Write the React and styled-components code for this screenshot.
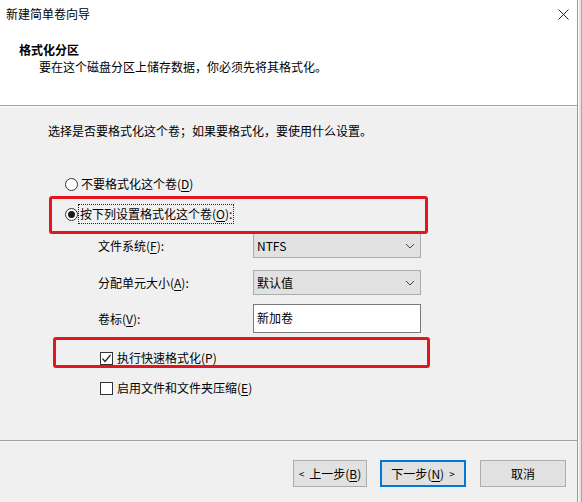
import React from "react";
import styled, { createGlobalStyle } from "styled-components";

const GlobalStyle = createGlobalStyle`
  html, body { margin: 0; padding: 0; background: #f0f0f0; }
  body {
    font-family: "Noto Sans CJK SC", "Noto Sans", "Liberation Sans", sans-serif;
    font-size: 12px;
    color: #000;
  }
  u { text-decoration: underline; text-underline-offset: 2px; }
`;

const Frame = styled.div`
  width: 582px;
  height: 502px;
  display: flex;
  overflow: hidden;
  background: #f0f0f0;
`;

const Window = styled.div`
  width: 578px;
  height: 502px;
  box-sizing: border-box;
  border-right: 1px solid #9a9a9a;
  display: flex;
  flex-direction: column;
  background: #f0f0f0;
`;

const Edge = styled.div`
  flex: 1;
  background: #e4e4e4;
  border-left: 1px solid #fafafa;
  box-shadow: inset -1px 0 0 #a8a8a8;
`;

const Header = styled.div`
  height: 106px;
  box-sizing: border-box;
  background: #fff;
  border-bottom: 1px solid #a0a0a0;
  box-shadow: 0 1px 0 #fff;
  display: flex;
  flex-direction: column;
`;

const TitleBar = styled.div`
  height: 28px;
  display: flex;
  align-items: center;
  justify-content: space-between;
  padding-left: 6px;
`;

const Title = styled.span`
  line-height: 16px;
`;

const CloseButton = styled.div`
  width: 28px;
  height: 28px;
  display: flex;
  align-items: center;
  justify-content: center;
`;

const HeadingBlock = styled.div`
  padding-left: 19px;
  margin-top: 14px;
`;

const Heading = styled.div`
  font-weight: bold;
  line-height: 16px;
`;

const SubHeading = styled.div`
  padding-left: 20px;
  margin-top: 1px;
  line-height: 16px;
`;

const Body = styled.div`
  flex: 1;
  position: relative;
  display: flex;
  flex-direction: column;
`;

const Intro = styled.div`
  padding: 17px 0 0 48px;
  line-height: 16px;
`;

const OptionRow = styled.div`
  height: 30px;
  display: flex;
  align-items: center;
  padding-left: ${(p) => p.$indent}px;
  margin-top: ${(p) => p.$top || 0}px;
  gap: ${(p) => p.$gap || 3}px;
`;

const RadioCircle = styled.span`
  width: 13px;
  height: 13px;
  box-sizing: border-box;
  border-radius: 50%;
  border: 1px solid #333;
  background: #fff;
  display: flex;
  align-items: center;
  justify-content: center;
  &::after {
    content: "";
    width: 7px;
    height: 7px;
    border-radius: 50%;
    background: ${(p) => (p.$checked ? "#1a1a1a" : "transparent")};
  }
`;

const CheckBox = styled.span`
  width: 13px;
  height: 13px;
  box-sizing: border-box;
  border: 1px solid #333;
  background: #fff;
  display: flex;
  align-items: center;
  justify-content: center;
`;

const OptionText = styled.span`
  line-height: 16px;
  padding: 1px 1px;
  outline: ${(p) => (p.$focused ? "1px dotted #222" : "none")};
`;

const FieldRow = styled.div`
  display: flex;
  align-items: center;
  height: ${(p) => p.$height}px;
  margin-top: ${(p) => p.$top}px;
  padding-left: 98px;
`;

const FieldLabel = styled.span`
  width: 155px;
  line-height: 16px;
`;

const Select = styled.div`
  width: 168px;
  height: 25px;
  box-sizing: border-box;
  background: #e1e1e1;
  border: 1px solid #adadad;
  display: flex;
  align-items: center;
  justify-content: space-between;
  padding: 0 5px 0 3px;
`;

const TextInput = styled.div`
  width: 168px;
  height: 29px;
  box-sizing: border-box;
  background: #fff;
  border: 1px solid #7a7a7a;
  display: flex;
  align-items: center;
  padding-left: 3px;
  padding-bottom: 2px;
`;

const Highlight = styled.div`
  position: absolute;
  left: ${(p) => p.$left}px;
  top: ${(p) => p.$top}px;
  width: ${(p) => p.$width}px;
  height: ${(p) => p.$height}px;
  box-sizing: border-box;
  border: 3px solid #e3161e;
  border-radius: 3px;
  pointer-events: none;
`;

const Footer = styled.div`
  height: 62px;
  box-sizing: border-box;
  border-top: 1px solid #a0a0a0;
  box-shadow: inset 0 1px 0 #f8f8f8;
  display: flex;
  justify-content: flex-end;
  align-items: flex-start;
  padding: 19px 11px 0 0;
`;

const Button = styled.div`
  width: ${(p) => p.$width}px;
  height: 27px;
  box-sizing: border-box;
  background: #e1e1e1;
  border: ${(p) => (p.$focused ? "2px solid #0078d7" : "1px solid #adadad")};
  display: flex;
  align-items: center;
  justify-content: center;
  margin-left: ${(p) => p.$gap || 0}px;
  line-height: 16px;
  gap: 5px;
`;

const Arrow = styled.span`
  font-size: 10px;
`;

const Chevron = () => (
  <svg width="10" height="6" viewBox="0 0 10 6">
    <polyline points="1,1 5,5 9,1" fill="none" stroke="#444" strokeWidth="1" />
  </svg>
);

export default function App() {
  return (
    <>
      <GlobalStyle />
      <Frame>
        <Window>
          <Header>
            <TitleBar>
              <Title>新建简单卷向导</Title>
              <CloseButton>
                <svg width="11" height="11" viewBox="0 0 11 11">
                  <path d="M0.5 0.5 L10.5 10.5 M10.5 0.5 L0.5 10.5" stroke="#222" strokeWidth="1" />
                </svg>
              </CloseButton>
            </TitleBar>
            <HeadingBlock>
              <Heading>格式化分区</Heading>
              <SubHeading>要在这个磁盘分区上储存数据，你必须先将其格式化。</SubHeading>
            </HeadingBlock>
          </Header>
          <Body>
            <Intro>选择是否要格式化这个卷；如果要格式化，要使用什么设置。</Intro>
            <OptionRow $indent={65} $top={30} $gap={2}>
              <RadioCircle />
              <OptionText>
                不要格式化这个卷(<u>D</u>)
              </OptionText>
            </OptionRow>
            <OptionRow $indent={65} $gap={1}>
              <RadioCircle $checked />
              <OptionText $focused>
                按下列设置格式化这个卷(<u>O</u>):
              </OptionText>
            </OptionRow>
            <FieldRow $height={25} $top={4}>
              <FieldLabel>
                文件系统(<u>F</u>):
              </FieldLabel>
              <Select>
                <span>NTFS</span>
                <Chevron />
              </Select>
            </FieldRow>
            <FieldRow $height={25} $top={12}>
              <FieldLabel>
                分配单元大小(<u>A</u>):
              </FieldLabel>
              <Select>
                <span>默认值</span>
                <Chevron />
              </Select>
            </FieldRow>
            <FieldRow $height={29} $top={9}>
              <FieldLabel>
                卷标(<u>V</u>):
              </FieldLabel>
              <TextInput>新加卷</TextInput>
            </FieldRow>
            <OptionRow $indent={100} $top={10} $gap={3}>
              <CheckBox>
                <svg width="11" height="11" viewBox="0 0 11 11">
                  <polyline points="1.5,5.5 4,8.5 9.5,2" fill="none" stroke="#222" strokeWidth="1.2" />
                </svg>
              </CheckBox>
              <OptionText>
                执行快速格式化(<u>P</u>)
              </OptionText>
            </OptionRow>
            <OptionRow $indent={100} $gap={3}>
              <CheckBox />
              <OptionText>
                启用文件和文件夹压缩(<u>E</u>)
              </OptionText>
            </OptionRow>
            <Highlight $left={49} $top={90} $width={379} $height={38} />
            <Highlight $left={53} $top={231} $width={377} $height={31} />
          </Body>
          <Footer>
            <Button $width={74}>
              <Arrow>&lt;</Arrow>
              <span>
                上一步(<u>B</u>)
              </span>
            </Button>
            <Button $width={86} $gap={13} $focused>
              <span>
                下一步(<u>N</u>)
              </span>
              <Arrow>&gt;</Arrow>
            </Button>
            <Button $width={86} $gap={14}>
              取消
            </Button>
          </Footer>
        </Window>
        <Edge />
      </Frame>
    </>
  );
}
